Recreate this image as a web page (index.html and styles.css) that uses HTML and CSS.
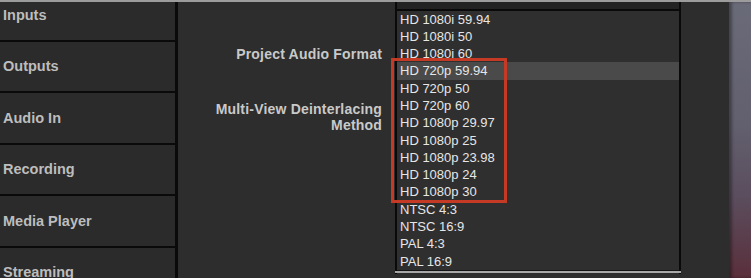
FILE: index.html
```html
<!DOCTYPE html>
<html lang="en">
<head>
  <meta charset="UTF-8">
  <title>Settings • Formats</title>
  <link rel="stylesheet" href="styles.css">
</head>
<body>

  <div class="topline"></div>

  <div class="app">
    <div class="sidebar">
      <div class="nav">
        <div class="nav-item">Inputs</div>
        <div class="nav-item">Outputs</div>
        <div class="nav-item">Audio In</div>
        <div class="nav-item">Recording</div>
        <div class="nav-item">Media Player</div>
        <div class="nav-item">Streaming</div>
      </div>
    </div>

    <div class="main">
      <div class="labels">
        <div class="label first">Project Audio Format</div>
        <div class="label second">Multi-View Deinterlacing<br>Method</div>
      </div>

      <div class="dropdown">
        <div class="dropdown-head"></div>
        <ul class="options">
          <li>HD 1080i 59.94</li>
          <li>HD 1080i 50</li>
          <li>HD 1080i 60</li>
          <li class="active">HD 720p 59.94</li>
          <li>HD 720p 50</li>
          <li>HD 720p 60</li>
          <li>HD 1080p 29.97</li>
          <li>HD 1080p 25</li>
          <li>HD 1080p 23.98</li>
          <li>HD 1080p 24</li>
          <li>HD 1080p 30</li>
          <li>NTSC 4:3</li>
          <li>NTSC 16:9</li>
          <li>PAL 4:3</li>
          <li>PAL 16:9</li>
        </ul>
        <div class="dropdown-foot"></div>
        <div class="callout"></div>
      </div>
    </div>

    <div class="photo"></div>
  </div>

</body>
</html>
```

FILE: styles.css
```css
:root {
  --panel: #2d2d2d;
  --side: #2b2b2b;
  --list: #2f2f2f;
  --edge: #0a0a0a;
  --label: #c9c9c9;
  --item: #e6e6e6;
  --mark: #c43a24;
}
body {
  margin: 0;
  height: 278px;
  overflow: hidden;
  background: var(--panel);
  font-family: 'Liberation Sans', Arial, sans-serif;
}
.topline {
  height: 2px;
  background: #9c9c9c;
}
.app {
  display: flex;
  height: 276px;
}

.sidebar {
  width: 175px;
  border-right: 3px solid var(--edge);
  background: var(--side);
  overflow: hidden;
}
.nav {
  margin-top: -12px;
}
.nav-item {
  height: 49.5px;
  border-bottom: 2px solid var(--edge);
  display: flex;
  align-items: center;
  padding-left: 3px;
  font-size: 14.5px;
  font-weight: bold;
  color: #bdbdbd;
}

.main {
  flex: 1;
  display: flex;
  gap: 13px;
}
.labels {
  width: 204px;
  text-align: right;
  font-size: 14px;
  font-weight: bold;
  letter-spacing: 0.2px;
  line-height: 16px;
  color: var(--label);
}
.label.first {
  margin-top: 44px;
}
.label.second {
  margin-top: 39px;
}

.dropdown {
  position: relative;
  width: 282px;
  height: 272px;
  border-left: 2px solid var(--edge);
  border-right: 2px solid var(--edge);
  display: flex;
  flex-direction: column;
}
.dropdown-head {
  height: 6.5px;
  background: #232323;
  border-bottom: 2px solid var(--edge);
}
.options {
  list-style: none;
  margin: 0;
  padding: 0;
  background: var(--list);
  border-bottom: 1px solid #151515;
}
.options li {
  height: 17.3px;
  line-height: 17.3px;
  padding-left: 3px;
  font-size: 13px;
  color: var(--item);
  white-space: nowrap;
}
.options li.active {
  background: #4a4a4a;
}
.dropdown-foot {
  height: 2px;
  margin-left: -2px;
  margin-right: -2px;
  background: #a8a8a8;
}
.callout {
  position: absolute;
  left: -6px;
  top: 56px;
  width: 116px;
  height: 145px;
  box-sizing: border-box;
  border: 3px solid var(--mark);
}

.photo {
  width: 22px;
  background: linear-gradient(180deg, #6a6b79 0%, #625f6e 45%, #5b4e5e 70%, #5a2f3b 100%);
  box-shadow: inset 3px 0 3px rgba(0, 0, 0, 0.35);
}
```
